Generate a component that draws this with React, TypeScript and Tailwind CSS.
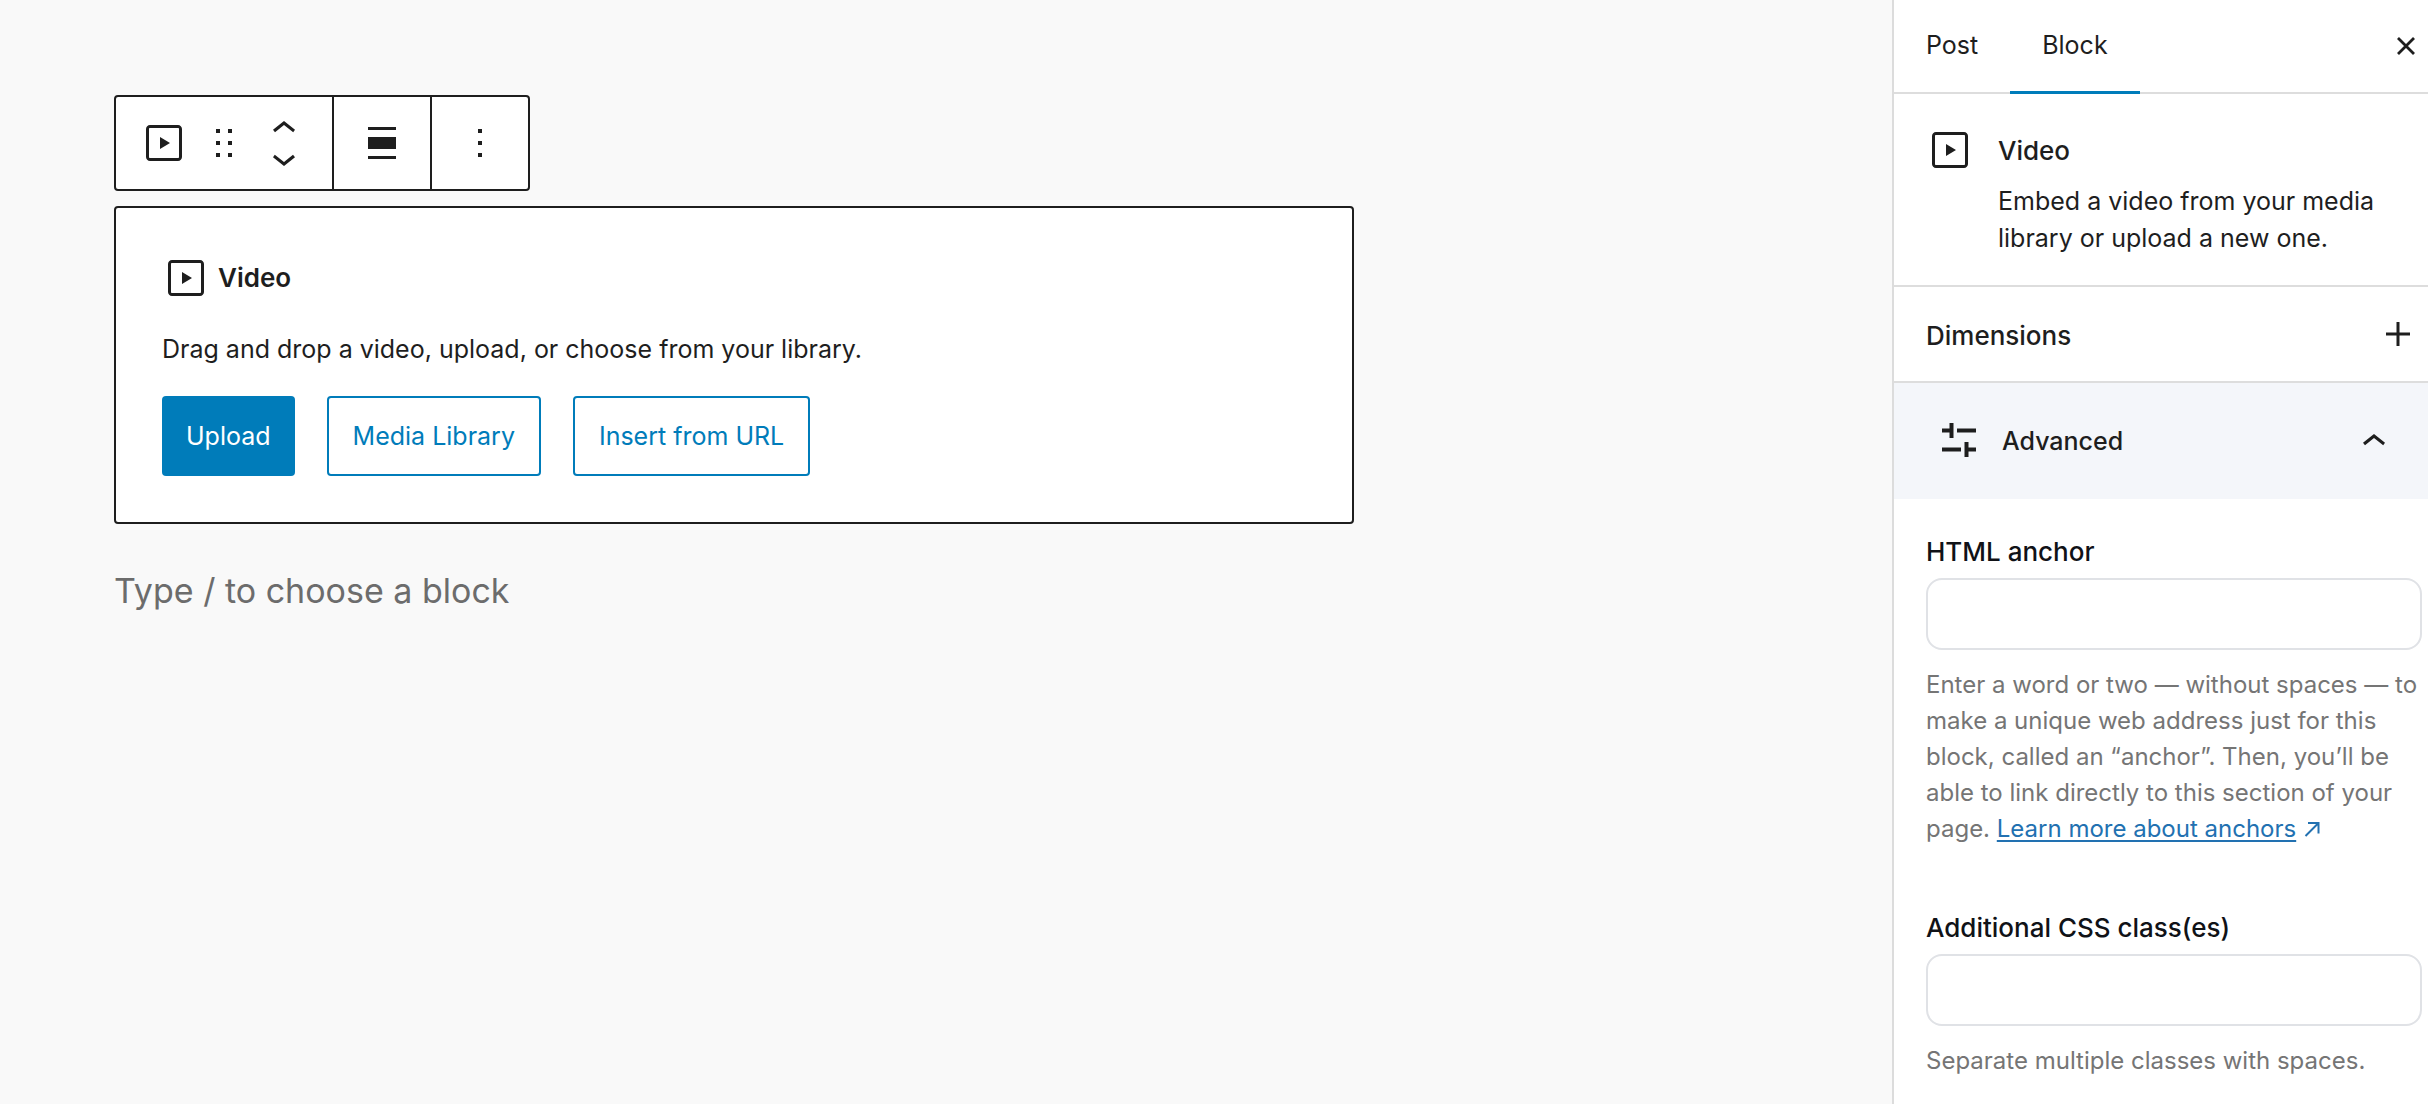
import React, { useState } from 'react';

type IconProps = { className?: string };

const VideoIcon: React.FC<IconProps> = ({ className = 'size-12' }) => (
  <svg viewBox="0 0 24 24" className={className} fill="currentColor" aria-hidden="true">
    <path
      fillRule="evenodd"
      d="M19 3H5c-1.1 0-2 .9-2 2v14c0 1.1.9 2 2 2h14c1.1 0 2-.9 2-2V5c0-1.1-.9-2-2-2zm.5 16c0 .3-.2.5-.5.5H5c-.3 0-.5-.2-.5-.5V5c0-.3.2-.5.5-.5h14c.3 0 .5.2.5.5v14zM10 15l5-3-5-3v6z"
    />
  </svg>
);

const DragIcon = () => (
  <svg viewBox="0 0 16 28" className="h-7 w-4" fill="currentColor" aria-hidden="true">
    <path d="M0 0h4v4H0zM12 0h4v4h-4zM0 12h4v4H0zM12 12h4v4h-4zM0 24h4v4H0zM12 24h4v4h-4z" />
  </svg>
);

const MoreIcon = () => (
  <svg viewBox="0 0 4 28" className="h-7 w-1" fill="currentColor" aria-hidden="true">
    <path d="M0 0h4v4H0zM0 12h4v4H0zM0 24h4v4H0z" />
  </svg>
);

const AlignIcon = () => (
  <svg viewBox="0 0 28 32" className="h-8 w-7" fill="currentColor" aria-hidden="true">
    <path d="M0 0h28v3H0zM0 10h28v12H0zM0 29h28v3H0z" />
  </svg>
);

const ChevronUp = () => (
  <svg viewBox="6 8 12 6" className="h-3 w-6" fill="currentColor" aria-hidden="true">
    <path d="M6.5 12.4 12 8l5.5 4.4-.9 1.2L12 10l-4.5 3.6-1-1.2z" />
  </svg>
);

const ChevronDown = () => (
  <svg viewBox="6 10 12 6" className="h-3 w-6" fill="currentColor" aria-hidden="true">
    <path d="M17.5 11.6 12 16l-5.5-4.4.9-1.2L12 14l4.5-3.6 1 1.2z" />
  </svg>
);

const CloseIcon = () => (
  <svg viewBox="0 0 18 18" className="size-[18px]" fill="none" stroke="currentColor" strokeWidth="2.8" aria-hidden="true">
    <path d="M1 1l16 16M17 1L1 17" />
  </svg>
);

const PlusIcon = () => (
  <svg viewBox="0 0 24 24" className="size-6" fill="currentColor" aria-hidden="true">
    <path d="M10.5 0h3v10.5H24v3H13.5V24h-3V13.5H0v-3h10.5z" />
  </svg>
);

const SlidersIcon = () => (
  <svg viewBox="0 0 34 34" className="size-[34px]" fill="currentColor" aria-hidden="true">
    <path d="M0 5.5h7.5V0h4v15h-4V9.5H0zM15 5.5h19v4H15zM0 24.5h19v4H0zM22.5 19h4v5.5H34v4h-7.5V34h-4z" />
  </svg>
);

const ExternalIcon = () => (
  <svg viewBox="0 0 16 16" className="ml-2 inline-block size-4 align-baseline text-[#2271b1]" fill="none" stroke="currentColor" strokeWidth="2" aria-hidden="true">
    <path d="M4 2h10.5v10.5M14.5 2 1.5 15" />
  </svg>
);

const tabs = ['Post', 'Block'];

interface TextFieldProps {
  id: string;
  label: string;
  children: React.ReactNode;
}

const TextField: React.FC<TextFieldProps> = ({ id, label, children }) => (
  <div>
    <label htmlFor={id} className="mb-2 block text-[26px] leading-9 font-medium text-[#101217]">
      {label}
    </label>
    <input
      id={id}
      type="text"
      aria-describedby={`${id}-help`}
      className="block h-[72px] w-full rounded-2xl border-2 border-[#e0e2e6] bg-white px-4 text-[25px] outline-none"
    />
    <div id={`${id}-help`} className="mt-[17px] text-2xl leading-9 text-[#757575]">
      {children}
    </div>
  </div>
);

const outlineButton = 'h-20 rounded-sm border-2 border-[#007cba] bg-white px-6 pt-0.5 text-[#007cba] whitespace-nowrap';

const App: React.FC = () => {
  const [tab, setTab] = useState('Block');
  const [open, setOpen] = useState(true);

  return (
    <div className="flex min-h-screen bg-[#f9f9f9] font-['Inter','Liberation_Sans',sans-serif] text-[25px] text-[#1e1e1e]">
      <main className="min-w-0 flex-1 px-[114px] pt-[95px]">
        {/* Block toolbar */}
        <div role="toolbar" aria-label="Block tools" className="flex h-24 w-fit divide-x-2 divide-[#1e1e1e] rounded-sm border-2 border-[#1e1e1e] bg-white">
          <div className="flex items-center gap-3 px-6">
            <button type="button" aria-label="Video">
              <VideoIcon />
            </button>
            <button type="button" aria-label="Drag" className="flex size-12 items-center justify-center">
              <DragIcon />
            </button>
            <div className="flex flex-col">
              <button type="button" aria-label="Move up" className="flex h-[33px] w-12 items-center justify-center">
                <ChevronUp />
              </button>
              <button type="button" aria-label="Move down" className="flex h-[33px] w-12 items-center justify-center">
                <ChevronDown />
              </button>
            </div>
          </div>
          <button type="button" aria-label="Align" className="flex w-[98px] items-center justify-center">
            <AlignIcon />
          </button>
          <button type="button" aria-label="Options" className="flex w-24 items-center justify-center">
            <MoreIcon />
          </button>
        </div>

        {/* Video placeholder */}
        <section className="mt-[15px] max-w-[1240px] rounded-sm border-2 border-[#1e1e1e] bg-white p-[46px]">
          <h2 className="flex items-center gap-2 text-[26px] leading-[48px] font-semibold">
            <VideoIcon />
            Video
          </h2>
          <p className="my-[26px] leading-[42px]">Drag and drop a video, upload, or choose from your library.</p>
          <div className="flex flex-wrap gap-8">
            <button type="button" className="h-20 rounded-sm bg-[#007cba] px-6 pt-0.5 text-white">Upload</button>
            <button type="button" className={outlineButton}>Media Library</button>
            <button type="button" className={outlineButton}>Insert from URL</button>
          </div>
        </section>

        <p className="mt-10 text-[34px] leading-[54px] text-[#6c6c6c]">Type / to choose a block</p>
      </main>

      <aside className="w-[536px] shrink-0 border-l-2 border-[#dcdcdc] bg-white">
        <div className="flex h-[94px] items-stretch shadow-[inset_0_-2px_#dddddd]">
          {tabs.map((t) => (
            <button
              key={t}
              type="button"
              aria-pressed={tab === t}
              onClick={() => setTab(t)}
              className={tab === t ? 'px-8 pb-0.5 shadow-[inset_0_-3px_#007cba]' : 'px-8 pb-0.5'}
            >
              {t}
            </button>
          ))}
          <button type="button" aria-label="Close settings" className="ml-auto px-[13px] pb-0.5">
            <CloseIcon />
          </button>
        </div>

        <div className="flex items-start gap-6 border-b-2 border-[#dddddd] px-8 pt-8 pb-7">
          <VideoIcon className="size-12 shrink-0" />
          <div>
            <h2 className="text-[26px] leading-[50px] font-medium">Video</h2>
            <p className="mt-[7px] leading-[37px]">Embed a video from your media library or upload a new one.</p>
          </div>
        </div>

        <div className="flex h-24 items-center justify-between border-b-2 border-[#dddddd] pr-[18px] pl-8">
          <h2 className="pt-0.5 text-[26px] font-medium">Dimensions</h2>
          <button type="button" aria-label="Dimensions options">
            <PlusIcon />
          </button>
        </div>

        <button
          type="button"
          aria-expanded={open}
          onClick={() => setOpen(!open)}
          className="flex h-[116px] w-full items-center bg-[#f4f6fa] pr-[42px] pb-0.5 pl-12 font-medium"
        >
          <SlidersIcon />
          <span className="ml-[26px] pt-1">Advanced</span>
          <span className="ml-auto">{open ? <ChevronUp /> : <ChevronDown />}</span>
        </button>

        {open && (
          <div className="space-y-[63px] pt-[35px] pr-1.5 pl-8">
            <TextField id="html-anchor" label="HTML anchor">
              Enter a word or two — without spaces — to make a unique web address just for this block, called an “anchor”. Then, you’ll be able to link directly to this section of your page.{' '}
              <a href="#anchors" className="text-[#2271b1] underline decoration-2 underline-offset-[3px]">
                Learn more about anchors
              </a>
              <ExternalIcon />
            </TextField>
            <TextField id="css-classes" label="Additional CSS class(es)">
              Separate multiple classes with spaces.
            </TextField>
          </div>
        )}
      </aside>
    </div>
  );
};

export default App;
